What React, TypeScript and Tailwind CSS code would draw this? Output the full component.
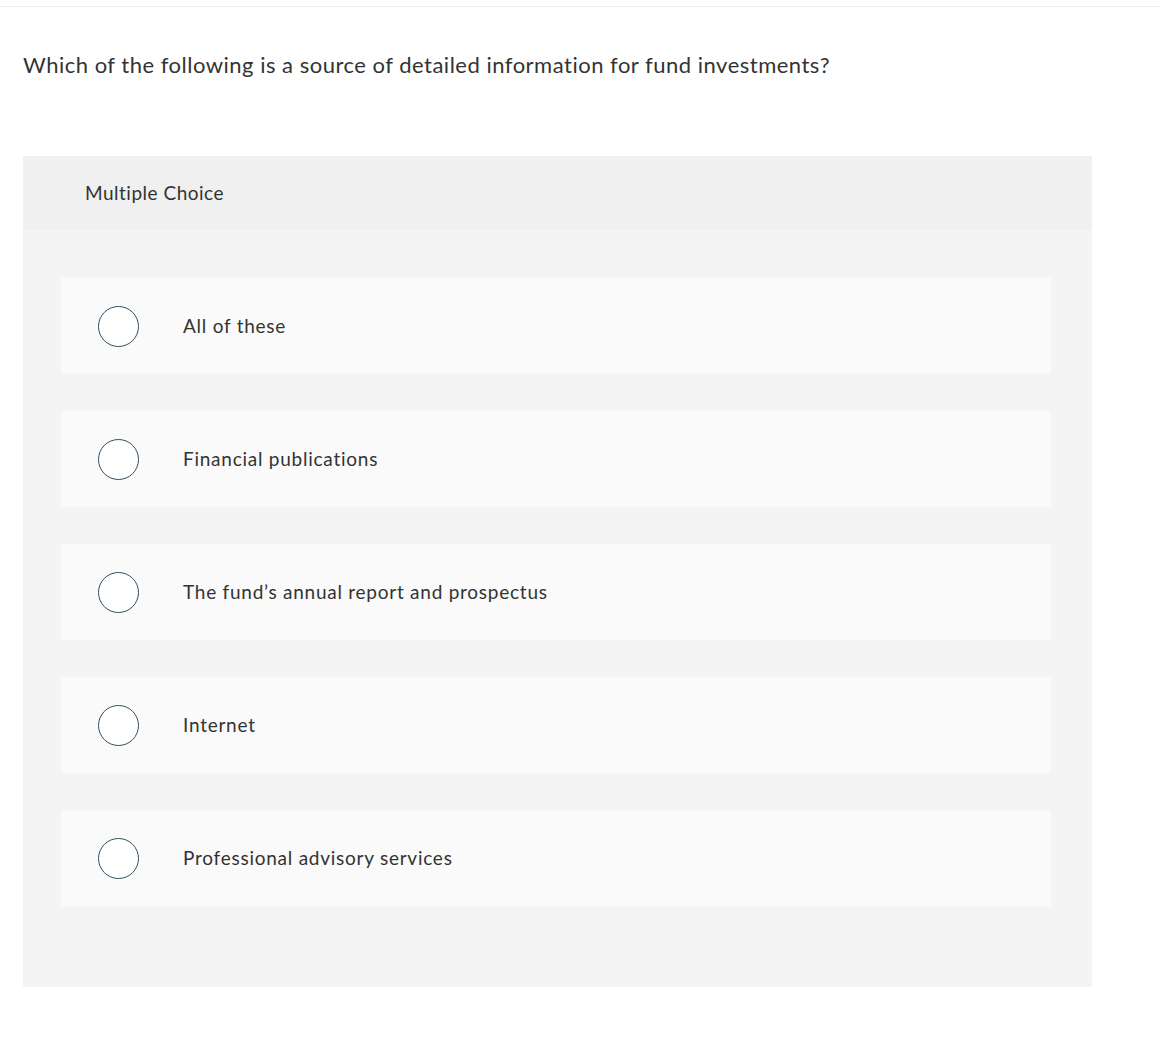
import React from "react";

const options = [
  "All of these",
  "Financial publications",
  "The fund\u2019s annual report and prospectus",
  "Internet",
  "Professional advisory services",
];

export default function App() {
  return (
    <div className="min-h-[1056px] w-[1160px] bg-white text-[#333333] tracking-[0.5px]" style={{ fontFamily: "Lato, 'Open Sans', sans-serif" }}>
      <div className="h-[7px] border-b border-[#ececec]" />
      <div className="pl-[23px] pt-[44px] text-[22px] leading-[28px]">
        Which of the following is a source of detailed information for fund investments?
      </div>
      <div className="ml-[23px] mt-[77px] w-[1069px] bg-[#f4f4f4]">
        <div className="flex h-[74px] items-center bg-[#f0f0f0] pl-[62px] text-[19px]">Multiple Choice</div>
        <div className="flex flex-col gap-[37px] px-[38px] pt-[48px] pb-[81px]">
          {options.map((o) => (
            <div key={o} className="flex h-[96px] w-[990px] items-center bg-[#fafafa]">
              <div className="ml-[37px] h-[41px] w-[41px] rounded-full border-[1.5px] border-[#2e4f5f] bg-white" />
              <div className="ml-[44px] text-[19px] tracking-[0.75px]">{o}</div>
            </div>
          ))}
        </div>
      </div>
    </div>
  );
}
